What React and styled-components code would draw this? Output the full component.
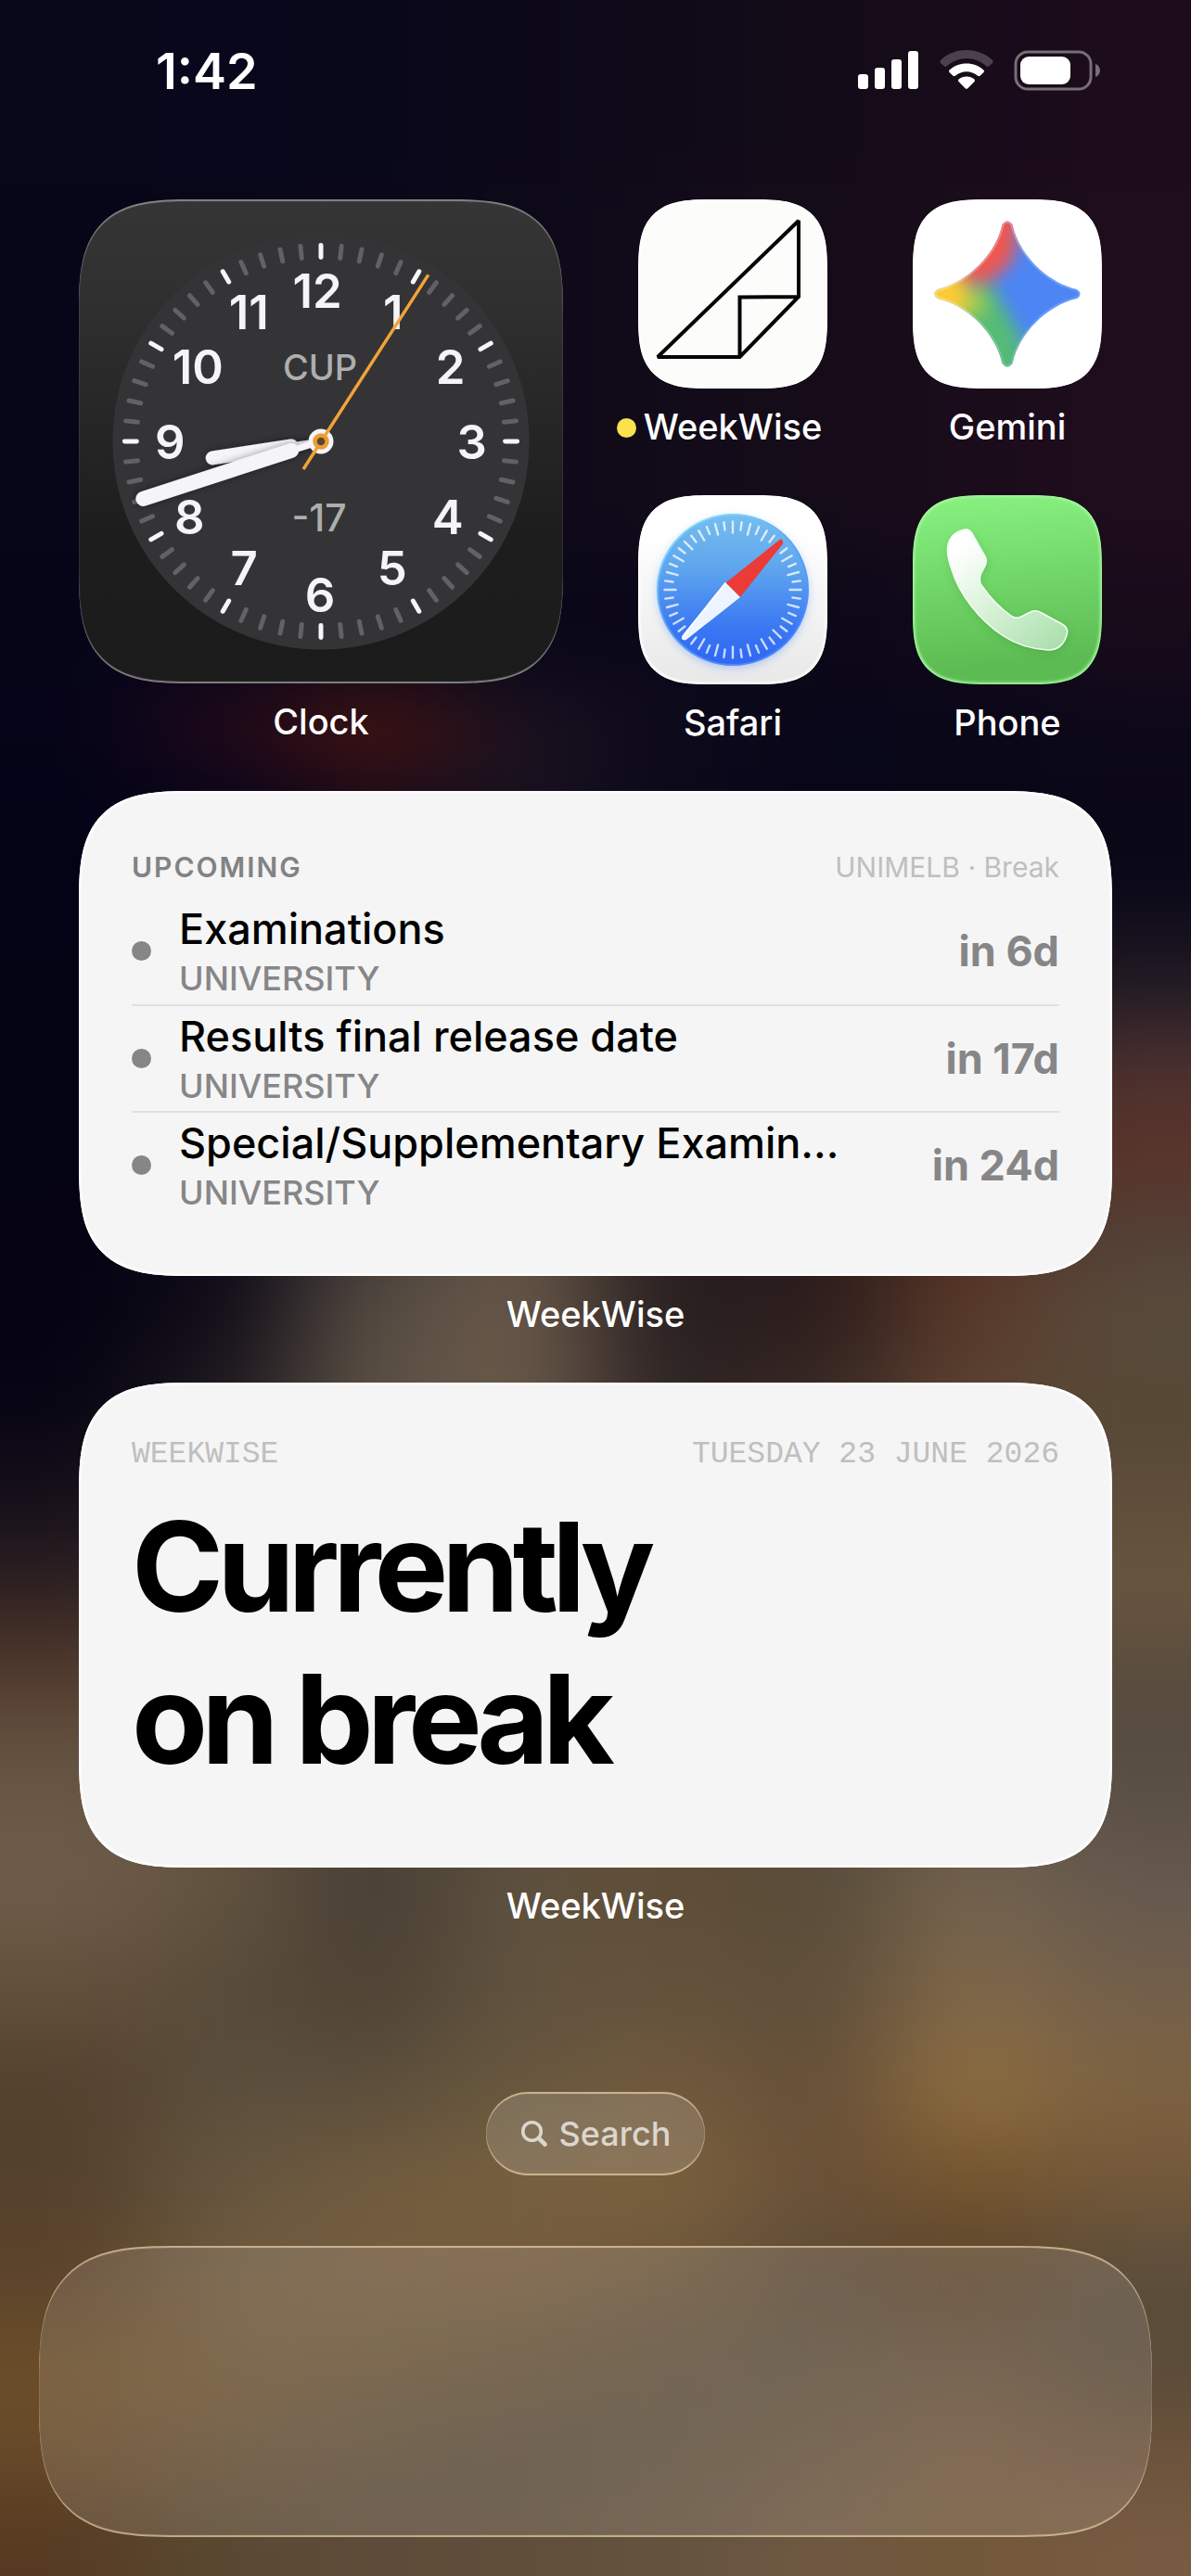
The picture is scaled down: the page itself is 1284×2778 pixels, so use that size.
import React from 'react';
import styled, { createGlobalStyle, css } from 'styled-components';

const EVENTS = [
	{ id: 1, title: 'Examinations', source: 'UNIVERSITY', due: 'in 6d' },
	{ id: 2, title: 'Results final release date', source: 'UNIVERSITY', due: 'in 17d' },
	{ id: 3, title: 'Special/Supplementary Examin...', source: 'UNIVERSITY', due: 'in 24d' },
];

// the numerals sit on a slightly uneven ring, so each has its own centre
const NUMERALS = [
	[12, -4, -163], [1, 78, -140], [2, 140, -81], [3, 163, 0],
	[4, 137, 81], [5, 77, 136], [6, -1, 165], [7, -83, 136],
	[8, -142, 81], [9, -163, 0], [10, -133, -81], [11, -78, -140],
];

// wallpaper colours, one line per band: [top, left ... right]
const BANDS = [
	[0, '#08071a', '#08071b', '#09081a', '#0b0819', '#100a18', '#130b18', '#180b1a', '#1d0c1c'],
	[200, '#070619', '#08071a', '#0a0719', '#0d0919', '#120b19', '#160c19', '#1a0c1b', '#1f0d1d'],
	[600, '#060518', '#07061a', '#08071a', '#090719', '#0a0719', '#0c0818', '#10091a', '#180b1a'],
	[740, '#050418', '#22091a', '#471410', '#1c1220', '#0d0a1c', '#080619', '#090718', '#0c0819'],
	[830, '#040316', '#06041a', '#150a18', '#18111e', '#0a0819', '#080618', '#090717', '#0a0717'],
	[1000, '#040314', '#040314', '#0c0916', '#15101a', '#0a0819', '#100c18', '#161218', '#1d1822'],
	[1100, '#040314', '#050415', '#16131a', '#2c2526', '#141018', '#201519', '#35211f', '#4a302f'],
	[1190, '#040314', '#060416', '#2a2526', '#4c4239', '#1c161b', '#2d1c1c', '#47281f', '#5a342b'],
	[1290, '#050313', '#0a0716', '#403a37', '#625344', '#231b1e', '#2a1b1b', '#52301f', '#524036'],
	[1370, '#050212', '#120e18', '#564c42', '#6a594a', '#281f20', '#2c1d1c', '#5a3a2b', '#594b3c'],
	[1470, '#080514', '#201b20', '#5c5145', '#6a594a', '#2d2424', '#3a2a25', '#5c4332', '#574835'],
	[1570, '#150f19', '#2a2324', '#55493e', '#604f40', '#40342d', '#4a3a2e', '#5f4b38', '#5d4d3a'],
	[1660, '#2c1f21', '#3a2d29', '#4d4238', '#5a4b3c', '#4a3d32', '#52432f', '#62503a', '#68563f'],
	[1750, '#4e372b', '#4e3e31', '#4d4238', '#554739', '#524434', '#564633', '#5c4c3a', '#5b4d3e'],
	[1840, '#645240', '#5c4c3b', '#4a4036', '#55483a', '#56482f', '#574835', '#5c4d3c', '#564c41'],
	[1930, '#6c5b48', '#63533f', '#484037', '#5b4e3e', '#5e4d36', '#584b3a', '#6a5b4a', '#5f534a'],
	[2010, '#6c5b48', '#61523f', '#483f35', '#5f523f', '#604e36', '#594c3a', '#75644f', '#675a4e'],
	[2100, '#624f3b', '#584b39', '#4e4334', '#61523f', '#64533c', '#5e4e3a', '#806848', '#735f4a'],
	[2200, '#53412e', '#5b4e3d', '#5b4e3c', '#68583e', '#70593d', '#654f38', '#8f6e40', '#7c6241'],
	[2300, '#54412c', '#65563f', '#705b3e', '#77603f', '#7b613d', '#6a5138', '#75552d', '#74593a'],
	[2400, '#5c432b', '#6e593e', '#745d40', '#745c3e', '#6d573c', '#5c4b38', '#5d452c', '#5c4d3b'],
	[2500, '#6a4e2a', '#6f5735', '#6b5639', '#66533a', '#60503d', '#5f503d', '#65523c', '#5a4b39'],
	[2600, '#674a29', '#654f35', '#5f4f3b', '#5c4d3d', '#5f503d', '#68553f', '#72583f', '#6c533c'],
	[2690, '#563b22', '#594932', '#5d4c39', '#5f4e3a', '#65533f', '#6f5942', '#725739', '#775b42'],
];

const Wallpaper = () => (
	<WallpaperSvg viewBox="0 0 1284 2778" preserveAspectRatio="none" aria-hidden="true">
		<defs>
			<filter id="soften" x="-20%" y="-20%" width="140%" height="140%" colorInterpolationFilters="sRGB">
				<feGaussianBlur stdDeviation="62 42" />
			</filter>
		</defs>
		<g filter="url(#soften)">
			{BANDS.map(([top, ...colors], row) => {
				const bottom = row === BANDS.length - 1 ? 3000 : BANDS[row + 1][0];
				const y = row === 0 ? -220 : top;
				return colors.map((color, i) => {
					const x = i === 0 ? -240 : i * 160.5;
					const right = i === 7 ? 1524 : (i + 1) * 160.5;
					return <rect key={`${row}-${i}`} x={x} y={y} width={right - x + 1} height={bottom - y + 1} fill={color} />;
				});
			})}
		</g>
	</WallpaperSvg>
);

const CellularIcon = () => (
	<svg width="66" height="44" viewBox="0 0 66 44" fill="#fff" role="img" aria-label="Mobile signal">
		<rect x="0" y="26" width="11" height="16" rx="3" />
		<rect x="18" y="19" width="11" height="23" rx="3" />
		<rect x="36" y="10" width="11" height="32" rx="3" />
		<rect x="54" y="1" width="11" height="41" rx="3" />
	</svg>
);

const WifiIcon = () => (
	<svg width="58" height="44" viewBox="0 0 58 44" role="img" aria-label="Wi-Fi">
		<path d="M29 0C18 0 8 4 1 11Q0 12.500 1 14L5 17.500Q6.500 18.500 8 17C14 12 21 9 29 9S44 12 50 17Q51.500 18.500 53 17.500L57 14Q58 12.500 57 11C50 4 40 0 29 0Z" fill="#4a414d" />
		<path d="M29 14.500C22 14.500 15.500 17 10.500 21.500Q9.500 22.800 10.500 24L14.500 27.800Q15.800 28.800 17.200 27.600C20.500 24.800 24.500 23.200 29 23.200S37.500 24.800 40.800 27.600Q42.200 28.800 43.500 27.800L47.500 24Q48.500 22.800 47.500 21.500C42.500 17 36 14.500 29 14.500Z" fill="#fff" />
		<path d="M29 28.500C25.800 28.500 22.800 29.600 20.500 31.600Q19.400 32.800 20.500 34L27.600 41.200Q29 42.400 30.400 41.200L37.500 34Q38.600 32.800 37.500 31.600C35.200 29.600 32.200 28.500 29 28.500Z" fill="#fff" />
	</svg>
);

const BatteryIcon = () => (
	<svg width="95" height="44" viewBox="0 0 95 44" role="img" aria-label="Battery">
		<rect x="2" y="2" width="81" height="40" rx="13" fill="none" stroke="#766e78" strokeWidth="3" />
		<rect x="7" y="7" width="54" height="30" rx="9" fill="#fff" />
		<path d="M88 15C91 16 93 19 93 22S91 28 88 29Z" fill="#766e78" />
	</svg>
);

const ClockFace = () => (
	<FaceSvg viewBox="-261.5 -261.5 523 523" role="img" aria-label="Clock, 1:42">
		<defs>
			<filter id="handShadow" x="-30%" y="-60%" width="160%" height="220%">
				<feDropShadow dx="0" dy="0" stdDeviation="4" floodColor="#000" floodOpacity="0.4" />
			</filter>
		</defs>
		<circle r="225" fill="#343436" />
		{Array.from({ length: 60 }, (_, i) => (
			<line
				key={i}
				y1="-212"
				y2="-199"
				stroke={i % 5 ? '#626264' : '#f6f6f8'}
				strokeWidth="5"
				strokeLinecap="round"
				transform={`rotate(${i * 6})`}
			/>
		))}
		{NUMERALS.map(([hour, x, y]) => (
			<FaceNumber key={hour} x={x} y={y + 19}>{hour}</FaceNumber>
		))}
		<FaceLabel x="-1" y="-66" fontSize="38">CUP</FaceLabel>
		<FaceLabel x="-2" y="97" fontSize="41">-17</FaceLabel>

		<g stroke="#f5f5f7" strokeLinecap="round">
			<g filter="url(#handShadow)">
				<path d="M0 0L-32 5" strokeWidth="7" />
				<path d="M-32 5L-117 18" strokeWidth="15" />
			</g>
			<g filter="url(#handShadow)">
				<path d="M0 0L-32 10" strokeWidth="7" />
				<path d="M-32 10L-192 62" strokeWidth="16" />
			</g>
		</g>
		<circle r="13.500" fill="#f5f5f7" />
		<path d="M-19 30L116 -180" stroke="#f2a33a" strokeWidth="3.500" />
		<circle r="6.500" fill="#5a4630" stroke="#ea9c35" strokeWidth="4.500" />
	</FaceSvg>
);

const WeekWiseLogo = () => (
	<LogoSvg viewBox="0 0 204 204" aria-hidden="true">
		<rect width="204" height="204" fill="#fcfcfb" />
		<path d="M21 170L173 23V105L109.500 170ZM109.500 170V105.500L173 105" fill="none" stroke="#050505" strokeWidth="4" strokeLinejoin="miter" strokeMiterlimit="2" />
	</LogoSvg>
);

const GEMINI = 'M96.500 27Q102 20 107.500 27C114 59 145 90 177 97Q184 102 177 107C145 114 114 145 107.500 177Q102 184 96.500 177C90 145 59 114 27 107Q20 102 27 97C59 90 90 59 96.500 27Z';

const GeminiLogo = () => (
	<LogoSvg viewBox="0 0 204 204" aria-hidden="true">
		<defs>
			<clipPath id="star"><path d={GEMINI} /></clipPath>
			<filter id="starBlur" x="-50%" y="-50%" width="200%" height="200%" colorInterpolationFilters="sRGB">
				<feGaussianBlur stdDeviation="9" />
			</filter>
			<linearGradient id="starEdge" x1="0" y1="0" x2="1" y2="1">
				<stop offset="0.2" stopColor="#fff" stopOpacity="0.3" />
				<stop offset="1" stopColor="#fff" stopOpacity="0.1" />
			</linearGradient>
		</defs>
		<rect width="204" height="204" fill="#fff" />
		<g clipPath="url(#star)">
			<rect width="204" height="204" fill="#4c86f5" />
			<g filter="url(#starBlur)">
				<path d="M50 -20H122L108 66L82 90L36 86Z" fill="#f0574e" />
				<path d="M60 96L86 92L102 124L118 150L118 224H70L40 130Z" fill="#55bb75" />
				<path d="M-30 50L50 78L64 102L58 124L-20 150Z" fill="#fccb35" />
				<path d="M54 96L72 92L82 116L66 132Z" fill="#a3cb52" />
			</g>
			<path d={GEMINI} fill="none" stroke="url(#starEdge)" strokeWidth="4" />
		</g>
	</LogoSvg>
);

const SafariLogo = () => (
	<LogoSvg viewBox="0 0 204 204" aria-hidden="true">
		<defs>
			<linearGradient id="safariBack" x1="0" y1="0" x2="0" y2="1">
				<stop offset="0.2" stopColor="#fff" />
				<stop offset="1" stopColor="#e8e8e8" />
			</linearGradient>
			<linearGradient id="safariSea" x1="0" y1="0" x2="0" y2="1">
				<stop offset="0" stopColor="#76bdee" />
				<stop offset="0.35" stopColor="#5fa6ee" />
				<stop offset="0.75" stopColor="#3a78f2" />
				<stop offset="1" stopColor="#2f66f4" />
			</linearGradient>
			<linearGradient id="safariRim" x1="0" y1="0" x2="0.600" y2="1">
				<stop offset="0" stopColor="#8ff0ff" />
				<stop offset="0.5" stopColor="#5aa9f8" />
				<stop offset="1" stopColor="#4a86fa" />
			</linearGradient>
			<filter id="seaShadow" x="-20%" y="-20%" width="140%" height="140%">
				<feDropShadow dx="0" dy="3" stdDeviation="4" floodColor="#3a78f2" floodOpacity="0.3" />
			</filter>
		</defs>
		<rect width="204" height="204" fill="url(#safariBack)" />
		<circle cx="102" cy="102" r="81" fill="url(#safariSea)" stroke="url(#safariRim)" strokeWidth="2" filter="url(#seaShadow)" />
		<g stroke="#fff" strokeOpacity="0.75" strokeWidth="2.400" strokeLinecap="round">
			{Array.from({ length: 48 }, (_, i) => (
				// the needle covers two of the marks
				i === 6 || i === 30 ? null : (
					<line key={i} x1="102" x2="102" y1="28.500" y2={i % 2 ? 37 : 40.500} transform={`rotate(${i * 7.5} 102 102)`} />
				)
			))}
		</g>
		<path d="M155 48Q157 50 155.500 53L110 110L94.500 94.500L152 48.500Q154 47 155 48Z" fill="#ec3a36" />
		<path d="M94.500 94.500L110 110L53 155Q50 157.500 48.800 155.500Q47 154 49 151Z" fill="#eef4ff" />
		<path d="M94.500 94.500L49 151Q47 154 48.800 155.500" fill="none" stroke="#fff" strokeWidth="2" />
	</LogoSvg>
);

const HANDSET = 'M56 37C60 36 63 39 65 43L78 66C80 70 79.500 74 77 78L73 86C72 90 72 94 74 97C83 110 94 122 106 130C109 132.500 113 133 117 131L127 126C131 124 135 124.500 138 126.500L161 139C166 142 168 146 166 151C163 161 156 167 146 167C130 166 113 162 98 152C72 135 50 107 42 80C37 66 35 54 42 45C46 40 51 38 56 37Z';

const PhoneLogo = () => (
	<LogoSvg viewBox="0 0 204 204" aria-hidden="true">
		<defs>
			<linearGradient id="phoneBack" x1="0" y1="0" x2="0.100" y2="1">
				<stop offset="0.05" stopColor="#86f07f" />
				<stop offset="0.95" stopColor="#5cbb52" />
			</linearGradient>
			<linearGradient id="handset" x1="0.100" y1="0" x2="0.850" y2="1">
				<stop offset="0.1" stopColor="#fff" />
				<stop offset="0.5" stopColor="#dbf4da" />
				<stop offset="1" stopColor="#ace0ae" />
			</linearGradient>
			<filter id="handsetShadow" x="-20%" y="-20%" width="140%" height="140%">
				<feDropShadow dx="1" dy="3" stdDeviation="4" floodColor="#2c7a2c" floodOpacity="0.25" />
			</filter>
		</defs>
		<rect width="204" height="204" fill="url(#phoneBack)" />
		<path d={HANDSET} fill="url(#handset)" stroke="#f4fdf3" strokeWidth="1.500" filter="url(#handsetShadow)" />
	</LogoSvg>
);

const APPS = [
	{ name: 'WeekWise', Logo: WeekWiseLogo, isNew: true, rim: '#fff' },
	{ name: 'Gemini', Logo: GeminiLogo, rim: '#fff' },
	{ name: 'Safari', Logo: SafariLogo, rim: '#fff' },
	{ name: 'Phone', Logo: PhoneLogo, rim: '#a5f5a0' },
];

export default function App() {
	return (
		<>
			<GlobalStyle />
			<Screen>
				<Wallpaper />
				<StatusBar>
					<Time>1:42</Time>
					<StatusIcons>
						<CellularIcon />
						<WifiIcon />
						<BatteryIcon />
					</StatusIcons>
				</StatusBar>

				<HomeGrid>
					<WidgetCell $cols={2} $rows={2}>
						<ClockCard><ClockFace /></ClockCard>
						<Label>Clock</Label>
					</WidgetCell>

					{APPS.map(({ name, Logo, isNew, rim }) => (
						<AppButton key={name} type="button">
							<AppIcon $rim={rim}><Logo /></AppIcon>
							<Label>
								{isNew && <NewDot />}
								{name}
							</Label>
						</AppButton>
					))}

					<WidgetCell $cols={4}>
						<Card $top={64}>
							<CardHeader>
								<Heading>UPCOMING</Heading>
								<Muted>UNIMELB · Break</Muted>
							</CardHeader>
							<EventList>
								{EVENTS.map((event) => (
									<EventRow key={event.id}>
										<EventDot />
										<EventText>
											<EventTitle>{event.title}</EventTitle>
											<EventSource>{event.source}</EventSource>
										</EventText>
										<EventDue>{event.due}</EventDue>
									</EventRow>
								))}
							</EventList>
						</Card>
						<Label>WeekWise</Label>
					</WidgetCell>

					<WidgetCell $cols={4}>
						<Card $top={60}>
							<CardHeader>
								<Mono>WEEKWISE</Mono>
								<Mono>TUESDAY 23 JUNE 2026</Mono>
							</CardHeader>
							<Status>Currently<br />on break</Status>
						</Card>
						<Label>WeekWise</Label>
					</WidgetCell>
				</HomeGrid>

				<SearchButton type="button">
					<svg width="30" height="30" viewBox="0 0 30 30" fill="none" stroke="currentColor" strokeLinecap="round" aria-hidden="true">
						<circle cx="12.500" cy="12.500" r="9.800" strokeWidth="3.600" />
						<path d="M20 20L26.500 26.500" strokeWidth="4.600" />
					</svg>
					Search
				</SearchButton>
				<Dock />
			</Screen>
		</>
	);
}

const GlobalStyle = createGlobalStyle`
	* { box-sizing: border-box; }
	body {
		margin: 0;
		background: #08071a;
		font-family: Inter, "Liberation Sans", sans-serif;
	}
	h2, p, ul { margin: 0; padding: 0; }
	button {
		border: none;
		padding: 0;
		background: none;
		font: inherit;
		cursor: pointer;
	}
`;

// rounder "continuous" corners where the browser has them
const corner = (radius, wide) => css`
	border-radius: ${radius}px;
	@supports (corner-shape: superellipse(1.6)) {
		border-radius: ${wide}px;
		corner-shape: superellipse(1.6);
	}
`;

const glassEdge = css`
	box-shadow:
		inset 0 2px 1px rgba(255, 226, 184, 0.6),
		inset 0 -2px 1px rgba(255, 226, 184, 0.6);
`;

const Screen = styled.main`
	position: relative;
	display: flex;
	flex-direction: column;
	min-height: 100vh;
	padding-bottom: 42px;
	overflow: hidden;
	isolation: isolate;
	color: #fff;
`;

const WallpaperSvg = styled.svg`
	position: absolute;
	inset: 0;
	width: 100%;
	height: 100%;
	z-index: -1;
`;

const StatusBar = styled.header`
	display: flex;
	align-items: center;
	justify-content: space-between;
	height: 152px;
	margin-bottom: 63px;
	padding: 0 96px 0 168px;
`;

const Time = styled.div`
	padding-top: 2px;
	font-size: 54px;
	font-weight: 600;
	line-height: 64px;
`;

const StatusIcons = styled.div`
	display: flex;
	align-items: center;
	gap: 22px;
`;

const HomeGrid = styled.div`
	display: grid;
	grid-template-columns: repeat(4, 1fr);
	row-gap: 51px;
	padding: 0 50px;
`;

const WidgetCell = styled.section`
	grid-column: span ${(props) => props.$cols};
	grid-row: span ${(props) => props.$rows || 1};
	display: flex;
	flex-direction: column;
	align-items: center;
	padding: 0 35px;
`;

const AppButton = styled.button`
	display: flex;
	flex-direction: column;
	align-items: center;
	color: inherit;
`;

const Label = styled.div`
	position: relative;
	margin-top: 18px;
	font-size: 38px;
	font-weight: 500;
	line-height: 46px;
`;

const NewDot = styled.span`
	position: absolute;
	right: 100%;
	top: 14px;
	width: 21px;
	height: 21px;
	margin-right: 8px;
	border-radius: 50%;
	background: #fbe14e;
`;

const AppIcon = styled.span`
	position: relative;
	display: block;
	width: 204px;
	height: 204px;
	overflow: hidden;
	${corner(52, 80)}

	&::after {
		content: '';
		position: absolute;
		inset: 0;
		${corner(52, 80)}
		box-shadow: inset 0 0 3px 2px ${(props) => props.$rim};
	}
`;

const LogoSvg = styled.svg`
	display: block;
	width: 100%;
	height: 100%;
`;

const ClockCard = styled.div`
	width: 100%;
	aspect-ratio: 1;
	background: linear-gradient(#353536, #303031 20%, #1d1d1e 70%, #1b1b1c);
	box-shadow:
		inset 0 2px 1px rgba(255, 255, 255, 0.4),
		inset 0 -2px 1px rgba(255, 255, 255, 0.45);
	${corner(86, 124)}
`;

const FaceSvg = styled.svg`
	display: block;
	width: 100%;
	height: 100%;
`;

const FaceNumber = styled.text`
	fill: #f5f5f7;
	font-size: 51px;
	font-weight: 600;
	text-anchor: middle;
`;

const FaceLabel = styled.text`
	fill: #aeaeb0;
	font-weight: 500;
	text-anchor: middle;
`;

const Card = styled.div`
	width: 100%;
	min-height: 523px;
	padding: ${(props) => props.$top}px 57px 57px;
	background: #f5f5f5;
	box-shadow: inset 0 0 2px 2px #fff;
	color: #000;
	${corner(86, 124)}
`;

const CardHeader = styled.div`
	display: flex;
	align-items: center;
	justify-content: space-between;
	line-height: 36px;
`;

const Heading = styled.h2`
	color: #828284;
	font-size: 30px;
	font-weight: 600;
	letter-spacing: 2px;
`;

const Muted = styled.span`
	color: #bfbfc0;
	font-size: 30px;
`;

const Mono = styled.span`
	color: #bfbfc0;
	font-family: "Liberation Mono", monospace;
	font-size: 33px;
`;

const EventList = styled.ul`
	margin-top: 15px;
	list-style: none;
`;

const EventRow = styled.li`
	display: flex;
	align-items: center;
	height: 115px;

	& + & {
		border-top: 2px solid #e0e0e0;
	}
`;

const EventDot = styled.span`
	width: 21px;
	height: 21px;
	margin-right: 30px;
	border-radius: 50%;
	background: #868688;
`;

const EventText = styled.div`
	flex: 1;
	min-width: 0;
`;

const EventTitle = styled.p`
	margin-bottom: 5px;
	font-size: 45px;
	font-weight: 500;
	line-height: 54px;
`;

const EventSource = styled.p`
	color: #868688;
	font-size: 36px;
	font-weight: 500;
	line-height: 42px;
`;

const EventDue = styled.span`
	color: #868688;
	font-size: 45px;
	font-weight: 700;
`;

const Status = styled.p`
	margin-top: 20px;
	font-size: 134px;
	font-weight: 700;
	line-height: 164px;
	letter-spacing: -7px;
`;

const SearchButton = styled.button`
	display: flex;
	align-items: center;
	align-self: center;
	gap: 12px;
	height: 90px;
	margin-top: auto;
	padding: 0 37px;
	border-radius: 45px;
	background: rgba(255, 255, 255, 0.14);
	color: #dcd6cd;
	${glassEdge}

	&& {
		font-size: 36px;
		font-weight: 500;
	}
`;

const Dock = styled.nav`
	height: 314px;
	margin: 76px 42px 0;
	background: rgba(255, 255, 255, 0.12);
	${glassEdge}
	${corner(130, 150)}
`;
